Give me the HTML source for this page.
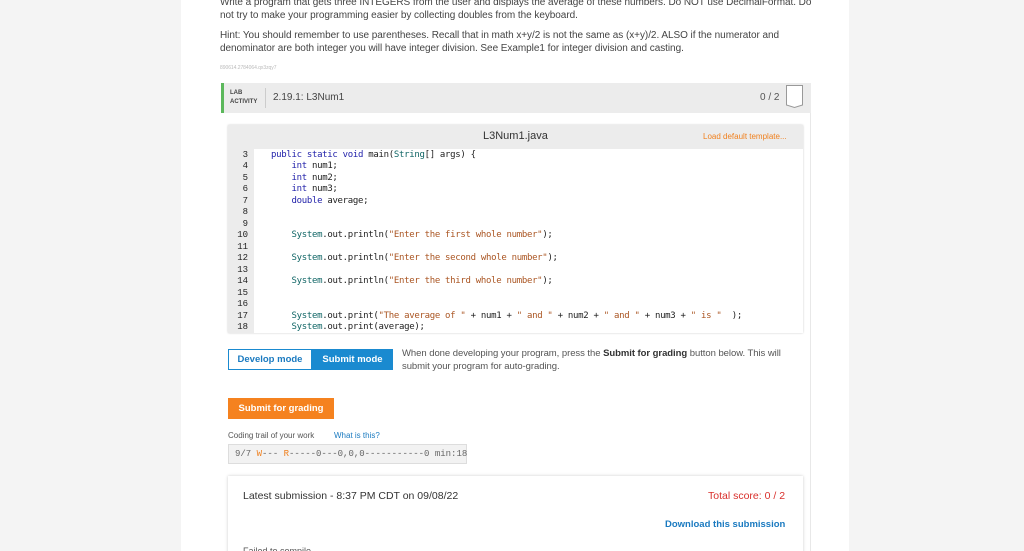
<!DOCTYPE html>
<html style="overflow:hidden;width:1024px;height:551px"><head><style>
body{margin:0;width:1024px;height:551px;overflow:hidden;background:#f4f4f4;font-family:"Liberation Sans",sans-serif;position:relative}
.col{position:absolute;left:181px;top:0;width:668px;height:551px;background:#fff}
.p{position:absolute;left:220px;font-size:10px;color:#444;line-height:12.5px;letter-spacing:-0.05px;white-space:nowrap}
.box{position:absolute;left:221px;top:83px;width:589px;height:468px;border:1px solid #e8e8e8;border-left:none;border-bottom:none;background:#fff}
.hdr{position:absolute;left:221px;top:83px;width:590px;height:30px;background:#ececec;border-left:3px solid #5cb85c;box-sizing:border-box}
.ed{position:absolute;left:228px;top:125px;width:575px;height:208px;background:#fff;box-shadow:0 0 2px #ccc}
.edh{position:absolute;left:228px;top:125px;width:575px;height:24px;background:#ececec}
.gut{position:absolute;left:228px;top:149px;width:26px;height:184px;background:#ececec}
.ln{position:absolute;left:228px;width:20px;text-align:right;font:9px "Liberation Mono",monospace;color:#222}
.cd{position:absolute;font:9px "DejaVu Sans Mono",monospace;color:#222;white-space:pre;letter-spacing:-0.3px}
.k{color:#22a}.t{color:#166}.s{color:#a52}
</style></head><body>
<div class="col"></div>
<div class="p" style="top:-3px">Write a program that gets three INTEGERS from the user and displays the average of these numbers. Do NOT use DecimalFormat. Do<br>not try to make your programming easier by collecting doubles from the keyboard.</div>
<div class="p" style="top:30px">Hint: You should remember to use parentheses. Recall that in math x+y/2 is not the same as (x+y)/2. ALSO if the numerator and<br>denominator are both integer you will have integer division. See Example1 for integer division and casting.</div>
<div class="p" style="top:62px;font-size:5px;color:#bbb">890614.2784064.qx3zqy7</div>
<div class="box"></div>
<div class="hdr"></div>
<div style="position:absolute;left:230px;top:89px;font-size:6px;font-weight:bold;color:#444;line-height:9px">LAB<br>ACTIVITY</div>
<div style="position:absolute;left:265px;top:88px;width:1px;height:20px;background:#ccc"></div>
<div style="position:absolute;left:273px;top:92px;font-size:10px;color:#444">2.19.1: L3Num1</div>
<div style="position:absolute;left:760px;top:92px;font-size:10px;color:#555">0 / 2</div>
<svg style="position:absolute;left:785px;top:84px" width="20" height="26"><path d="M1.5 1.5H17.5V21L9.5 23.5 1.5 21Z" fill="#fff" stroke="#999"/></svg>
<div class="ed"></div><div class="edh"></div><div class="gut"></div>
<div style="position:absolute;left:483px;top:130px;font-size:11px;color:#333">L3Num1.java</div>
<div style="position:absolute;left:703px;top:132px;font-size:8px;color:#f0801e">Load default template...</div>
<div class="ln" style="top:150px;line-height:11.47px">3<br>4<br>5<br>6<br>7<br>8<br>9<br>10<br>11<br>12<br>13<br>14<br>15<br>16<br>17<br>18</div>
<div class="cd" style="left:271px;top:150px;line-height:11.47px"><span class="k">public static void</span> main(<span class="t">String</span>[] args) {
    <span class="k">int</span> num1;
    <span class="k">int</span> num2;
    <span class="k">int</span> num3;
    <span class="k">double</span> average;


    <span class="t">System</span>.out.println(<span class="s">"Enter the first whole number"</span>);

    <span class="t">System</span>.out.println(<span class="s">"Enter the second whole number"</span>);

    <span class="t">System</span>.out.println(<span class="s">"Enter the third whole number"</span>);


    <span class="t">System</span>.out.print(<span class="s">"The average of "</span> + num1 + <span class="s">" and "</span> + num2 + <span class="s">" and "</span> + num3 + <span class="s">" is "</span>  );
    <span class="t">System</span>.out.print(average);</div>
<div style="position:absolute;left:228px;top:349px;width:84px;height:21px;border:1px solid #1a8ad0;box-sizing:border-box;font-size:9.5px;font-weight:bold;color:#1a7ac0;text-align:center;line-height:19px">Develop mode</div>
<div style="position:absolute;left:312px;top:349px;width:81px;height:21px;background:#1a8ad0;font-size:9.5px;font-weight:bold;color:#fff;text-align:center;line-height:21px">Submit mode</div>
<div class="p" style="left:402px;top:348px;font-size:9.5px;color:#555">When done developing your program, press the <b style="color:#333">Submit for grading</b> button below. This will<br>submit your program for auto-grading.</div>
<div style="position:absolute;left:228px;top:398px;width:106px;height:21px;background:#f5821f;font-size:9.5px;font-weight:bold;color:#fff;text-align:center;line-height:21px">Submit for grading</div>
<div style="position:absolute;left:228px;top:431px;font-size:8px;color:#555">Coding trail of your work</div>
<div style="position:absolute;left:334px;top:431px;font-size:8px;color:#1a7ac0">What is this?</div>
<div style="position:absolute;left:228px;top:444px;width:239px;height:20px;background:#f2f2f2;border:1px solid #ddd;box-sizing:border-box;font:9px 'Liberation Mono',monospace;color:#666;line-height:18px;padding-left:6px;white-space:pre">9/7 <span style="color:#f0801e">W</span>--- <span style="color:#f0801e">R</span>-----0---0,0,0-----------0 min:18</div>
<div style="position:absolute;left:228px;top:476px;width:575px;height:80px;background:#fff;box-shadow:0 0 3px #ccc"></div>
<div style="position:absolute;left:243px;top:490px;font-size:10.5px;color:#333">Latest submission - 8:37 PM CDT on 09/08/22</div>
<div style="position:absolute;left:708px;top:490px;font-size:10.5px;color:#d9302c">Total score: 0 / 2</div>
<div style="position:absolute;left:665px;top:519px;font-size:9.5px;font-weight:bold;color:#1a7ac0">Download this submission</div>
<div style="position:absolute;left:243px;top:546px;font-size:9px;color:#555">Failed to compile</div>
</body></html>
